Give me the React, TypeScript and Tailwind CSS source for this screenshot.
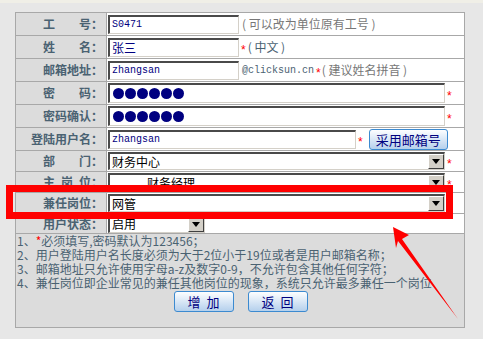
import React from "react";

const cjk = "font-['Noto_Sans_CJK_SC',sans-serif]";

function Star() {
  return <span className="text-[#ff0000] text-[12px] leading-none ml-[2px] mt-[5px] font-['Liberation_Sans',sans-serif]">*</span>;
}

function Arrow() {
  return (
    <svg width="8" height="5" viewBox="0 0 8 5">
      <polygon points="0,0 8,0 4,5" fill="#000" />
    </svg>
  );
}

function Inset({ className, children }: { className: string; children?: React.ReactNode }) {
  return (
    <div
      className={
        "h-[19px] bg-white border-t-2 border-l-2 border-b border-r border-t-[#4a4a4a] border-l-[#4a4a4a] border-b-[#d4d0c8] border-r-[#d4d0c8] flex items-center pl-[2px] overflow-hidden shrink-0 " +
        className
      }
    >
      {children}
    </div>
  );
}

function Select({ className, text, pad }: { className: string; text: string; pad?: string }) {
  return (
    <div
      className={
        "h-[18px] bg-white border-t-2 border-l-2 border-b border-r border-t-[#4a4a4a] border-l-[#4a4a4a] border-b-[#d4d0c8] border-r-[#d4d0c8] flex items-center overflow-hidden shrink-0 " +
        className
      }
    >
      <span className={"text-[12px] leading-none text-black " + (pad ?? "pl-[2px]")}>{text}</span>
      <div className="ml-auto w-[16px] h-full bg-[#d4d0c8] border-t border-l border-t-white border-l-white border-b border-r border-b-[#404040] border-r-[#404040] flex items-center justify-center">
        <Arrow />
      </div>
    </div>
  );
}

function Row({ label, h, children }: { label: React.ReactNode; h: string; children?: React.ReactNode }) {
  return (
    <div className={"flex border-b border-[#a8a8a8] " + h}>
      <div className="w-[91px] shrink-0 bg-[#dcdcdc] border-r border-[#a8a8a8] flex items-center justify-end pr-[3px] text-[12px] font-bold text-[#4a6272] whitespace-pre">
        {label}
      </div>
      <div className="flex-1 bg-white flex items-center pl-[1px]">{children}</div>
    </div>
  );
}

function Dots() {
  return (
    <div className="flex gap-[1px] pl-[1px]">
      {[0, 1, 2, 3, 4, 5].map((i) => (
        <div key={i} className="w-[11px] h-[11px] rounded-full bg-[#000080]" />
      ))}
    </div>
  );
}

const mono = "font-['Liberation_Mono',monospace] text-[10px] leading-none text-[#000080]";

function Btn({ children, className }: { children: React.ReactNode; className?: string }) {
  return (
    <div
      className={
        "h-[21px] border border-[#3c8ad0] rounded-[3px] bg-linear-to-b from-[#fdfeff] to-[#b5d0ec] flex items-center justify-center text-[13px] text-[#000080] leading-none " +
        (className ?? "")
      }
    >
      {children}
    </div>
  );
}

export default function App() {
  return (
    <div className={"relative w-[483px] h-[339px] overflow-hidden bg-[#e7e7e7] " + cjk}>
      <div className="h-[3px] bg-[#f0efe7]" />
      <div className="pt-[9px] pl-[15px]">
        <div className="w-[450px] border border-[#a8a8a8]">
          <Row label="工　　号：" h="h-[23px]">
            <Inset className="w-[131px]">
              <span className={mono}>S0471</span>
            </Inset>
            <span className="ml-[3px] text-[12px] text-[#777]">(&nbsp;可以改为单位原有工号&nbsp;)</span>
          </Row>
          <Row label="姓　　名：" h="h-[23px]">
            <Inset className="w-[131px]">
              <span className="text-[12px] leading-none text-[#000080]">张三</span>
            </Inset>
            <Star />
            <span className="ml-[2px] text-[12px] text-[#4a6272]">(&nbsp;中文&nbsp;)</span>
          </Row>
          <Row label="邮箱地址：" h="h-[23px]">
            <Inset className="w-[131px]">
              <span className={mono}>zhangsan</span>
            </Inset>
            <span className="ml-[3px] font-['Liberation_Mono',monospace] text-[10px] text-[#4a6272]">@clicksun.cn</span>
            <Star />
            <span className="ml-[1px] text-[12px] text-[#777]">(&nbsp;建议姓名拼音&nbsp;)</span>
          </Row>
          <Row label="密　　码：" h="h-[23px]">
            <Inset className="w-[337px] h-[20px]">
              <Dots />
            </Inset>
            <Star />
          </Row>
          <Row label="密码确认：" h="h-[23px]">
            <Inset className="w-[337px] h-[20px]">
              <Dots />
            </Inset>
            <Star />
          </Row>
          <Row label="登陆用户名：" h="h-[23px]">
            <Inset className="w-[248px]">
              <span className={mono}>zhangsan</span>
            </Inset>
            <Star />
            <Btn className="w-[79px] ml-[6px]">采用邮箱号</Btn>
          </Row>
          <Row label="部　　门：" h="h-[21px]">
            <Select className="w-[337px]" text="财务中心" />
            <Star />
          </Row>
          <Row
            label={
              <span className="flex">
                主<span className="inline-block w-[6px]" />岗<span className="inline-block w-[6px]" />位：
              </span>
            }
            h="h-[21px]"
          >
            <Select className="w-[337px]" text="财务经理" pad="pl-[37px]" />
            <Star />
          </Row>
          <Row label="兼任岗位：" h="h-[21px]">
            <Select className="w-[337px]" text="网管" />
          </Row>
          <Row label="用户状态：" h="h-[20px]">
            <Select className="w-[97px]" text="启用" />
          </Row>
          <div className="h-[93px] bg-[#dcdcdc] text-[12px] leading-[14px] text-[#4a6272] pl-[1px]">
            <div>
              1、<span className="text-[#ff0000]">*</span>必须填写,密码默认为123456；
            </div>
            <div>2、用户登陆用户名长度必须为大于2位小于19位或者是用户邮箱名称；</div>
            <div>3、邮箱地址只允许使用字母a-z及数字0-9，不允许包含其他任何字符；</div>
            <div>4、兼任岗位即企业常见的兼任其他岗位的现象，系统只允许最多兼任一个岗位</div>
            <div className="flex justify-center gap-[14px] mt-[1px]">
              <Btn className="w-[60px]">增&nbsp;&nbsp;加</Btn>
              <Btn className="w-[60px]">返&nbsp;&nbsp;回</Btn>
            </div>
          </div>
        </div>
      </div>
      <div className="absolute left-[6px] top-[185px] w-[447px] h-[34px] border-[7px] border-[#ff0000]" />
      <svg className="absolute left-0 top-0 pointer-events-none" width="483" height="339" viewBox="0 0 483 339">
        <polygon points="393,227 409,235 402,239 458,319 398,241 396,248" fill="#ff0000" />
      </svg>
    </div>
  );
}
